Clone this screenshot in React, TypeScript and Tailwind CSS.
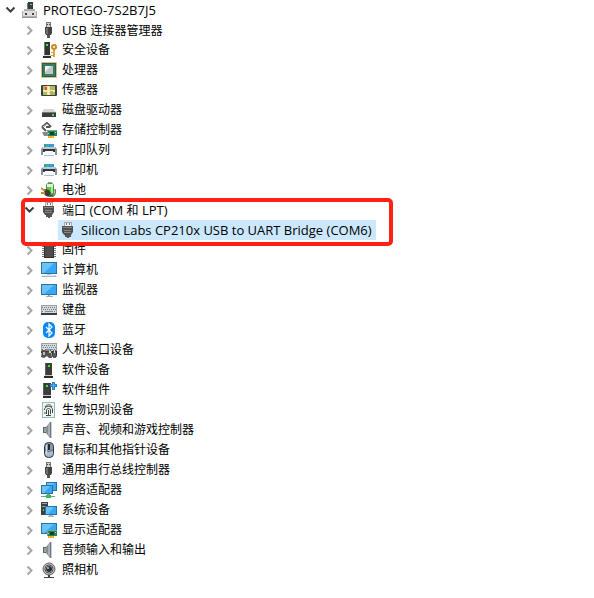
import type { ReactNode } from "react";

type IconName =
  | "root" | "usb" | "security" | "cpu" | "sensor" | "disk" | "storage" | "printer" | "battery"
  | "port" | "firmware" | "computer" | "monitor" | "keyboard" | "bluetooth" | "hid" | "software"
  | "component" | "fingerprint" | "speaker" | "mouse" | "network" | "system" | "display" | "camera";

const monitorAt = (x: number, y: number, w: number, h: number) => (
  <>
    <rect x={x} y={y} width={w} height={h} fill="#2f719e" />
    <rect x={x + 1} y={y + 1} width={w - 2} height={h - 2} fill="#35a9f5" />
    <path d={`M${x + 1} ${y + 1}h${w - 4}L${x + 3} ${y + h - 1}H${x + 1}z`} fill="#69c3fb" />
  </>
);

const tower = (
  <>
    <path d="M4 1h7v12H4z" fill="#3d3d3d" />
    <path d="M3 14h9v2H3z" fill="#2c2c2c" />
    <path d="M4 13h7v1H4z" fill="#c9c9c9" />
    <path d="M4 1h1v12H4z" fill="#5e5e5e" />
    <path d="M7 3h2v2H7z" fill="#2cf32c" />
  </>
);

const board = (
  <>
    <path d="M6 8h10v6H6z" fill="#278255" />
    <path d="M6 8h10v1H6zM6 8h1v6H6z" fill="#75aa8e" />
    <path d="M9 10h4v3H9z" fill="#153f2d" />
    <path d="M14 10h1v1h-1zM7 11h1v1H7z" fill="#aee0b9" />
    <path d="M7 14h6v2H7z" fill="#f2a22d" />
    <path d="M8 14h1v2H8zM11 14h1v2h-1z" fill="#ffc44d" />
  </>
);

const keys = (
  <>
    <path d="M0 3h16v9H0z" fill="#9ba2a8" />
    <path d="M1 4h14v7H1z" fill="#d5dadd" />
    <path d="M1 5.500h14M1 9.500h2M13 9.500h2" stroke="#747c82" strokeDasharray="1 1" />
    <path d="M2 7.500h13" stroke="#747c82" strokeDasharray="1 1" />
    <path d="M4 9.500h8" stroke="#858c91" />
    <path d="M0 11h16v2H0z" fill="#343d43" />
  </>
);

const drawings: Record<IconName, ReactNode> = {
  root: (
    <>
      <path d="M6 0h5v8H6z" fill="#3b3b3b" />
      <path d="M5 1h1v7H5z" fill="#777" />
      <path d="M8 2h2v1H8z" fill="#35e86b" />
      <path d="M2 7h11v2h2v6H0V9h2z" fill="#b0b0b0" />
      <path d="M1 9h13v5H1z" fill="#dedede" />
      <path d="M3 11h2v2H3zM10 11h2v2h-2z" fill="#444" />
      <path d="M0 15h15v1H0z" fill="#999" />
    </>
  ),
  usb: (
    <>
      <path d="M5 0h5v6H5z" fill="#777" />
      <path d="M6 1h3v4H6z" fill="#d6d6d6" />
      <path d="M6 2h1v1H6zM8 2h1v1H8z" fill="#444" />
      <path d="M4 5h7v6l-1 2H5l-1-2z" fill="#454545" />
      <path d="M5 6h2v6H5z" fill="#707070" />
      <path d="M6 13h3v3H6z" fill="#555" />
    </>
  ),
  security: (
    <>
      <path d="M3 0h6v13H3z" fill="#343434" />
      <path d="M3 0h1v13H3z" fill="#777" />
      <path d="M2 14h8v2H2z" fill="#303030" />
      <path d="M3 13h7v1H3z" fill="#ddd" />
      <path d="M5 2h2v2H5z" fill="#2cf32c" />
      <circle cx="13" cy="5" r="2" fill="none" stroke="#c88b20" strokeWidth="2" />
      <path d="M12 8h2v7h-2zM10 10h2v1h-2zM10 13h2v1h-2z" fill="#dda23a" />
    </>
  ),
  cpu: (
    <>
      <rect x="0.5" y="0.5" width="15" height="15" fill="#f3e5bd" stroke="#b98c31" strokeDasharray="1 1" />
      <path d="M1 1h14v14H1z" fill="#235f49" />
      <path d="M2 2h12v12H2z" fill="#377b60" />
      <path d="M4 4h8v8H4z" fill="#bfc7c8" />
      <path d="M4 4h6l-6 6z" fill="#eef0f0" />
    </>
  ),
  sensor: (
    <>
      <rect y="3" width="16" height="11" rx="1" fill="#414141" />
      <path d="M2 4h12v9H2z" fill="#f3e3a4" />
      <path d="M2 4h3v4H2zM9 4h5v4H9zM9 10h5v3H9zM2 10h4v3H2z" fill="#a9bd58" />
      <path d="M2 9h12M7.500 4v9" stroke="#fff2bd" />
      <path d="M4 5h2v3H4z" fill="#e44d34" />
      <path d="M9 9h3v1H9z" fill="#ee995d" />
    </>
  ),
  disk: (
    <>
      <path d="M3 7h9l3 3H1z" fill="#d5d5d5" />
      <path d="M1 10h14v5H1z" fill="#3c3c3c" />
      <path d="M1 10h14v1H1z" fill="#777" />
      <path d="M11 12h2v2h-2z" fill="#43dc5d" />
    </>
  ),
  storage: (
    <>
      <path d="M1 5l5-4 4 4M1 5l4 4M5 5h4" fill="none" stroke="#555" strokeWidth="2" />
      <path d="M2 5l4-3 2 2" fill="none" stroke="#c9c9c9" />
      <path d="M1 10h6v4H3z" fill="#888" />
      {board}
    </>
  ),
  printer: (
    <>
      <path d="M3 2h10v4H3z" fill="#3d8fc6" />
      <path d="M5 2h3v3H5z" fill="#33b98c" />
      <path d="M9 2h3v3H9z" fill="#2ea0ef" />
      <path d="M2 5h12l2 2v6h-2V9H2v4H0V7z" fill="#8b9195" />
      <path d="M2 5h12v2H2z" fill="#c3c9cc" />
      <path d="M2 7h12v3H2z" fill="#30383d" />
      <path d="M4 9h8l1 5H3z" fill="#f4f6f7" />
      <path d="M3 13h10v1H3z" fill="#b7bec3" />
    </>
  ),
  battery: (
    <>
      <path d="M7 0h4v2H7z" fill="#999" />
      <rect x="5" y="1" width="8" height="14" rx="3" fill="#43973d" />
      <path d="M6 5h6v7H6z" fill="#55ca45" />
      <path d="M6 2h6v3H6z" fill="#dff0db" />
      <path d="M10 5h2v6h-2z" fill="#a7e88e" />
      <path d="M3 7l5 1 2 3-2 3H5l-2-2z" fill="#3b3b3b" />
      <path d="M0 6l4 3M0 11h4" stroke="#c39330" strokeWidth="2" />
      <path d="M9 13c4 3 6 0 5-6" fill="none" stroke="#333" />
    </>
  ),
  port: (
    <>
      <path d="M4 0h8v5H4z" fill="#aaa" />
      <path d="M5 1h6v3H5z" fill="#f1f1f1" />
      <path d="M6 1h1v2H6zM9 1h1v2H9z" fill="#777" />
      <path d="M2 4h11v6l-2 3H4l-2-3z" fill="#505050" />
      <path d="M3 5h9v1H3zM4 8h7v1H4zM4 10h7v1H4z" fill="#858585" />
      <path d="M5 13h2v2H5zM9 13h2v2H9zM7 12h2v4H7z" fill="#555" />
    </>
  ),
  firmware: (
    <>
      <path d="M1 2.500h14M1 4.500h14M1 6.500h14M1 8.500h14M1 10.500h14M1 12.500h14M1 14.500h14" stroke="#777" />
      <path d="M3 1h10v15H3z" fill="#303030" />
      <path d="M4 2h8v13H4z" fill="#4d4d4d" />
    </>
  ),
  computer: (
    <>
      {monitorAt(0, 0, 16, 12)}
      <path d="M6 12h4v1H6z" fill="#b9c6d0" />
      <path d="M2 13h12l2 2H0z" fill="#a7b5c2" />
      <path d="M2 13h12v1H2z" fill="#e3e9ed" />
    </>
  ),
  monitor: (
    <>
      {monitorAt(0, 2, 16, 11)}
      <path d="M7 13h2v1H7zM5 14h7v1H5z" fill="#9cabb7" />
    </>
  ),
  keyboard: keys,
  bluetooth: (
    <>
      <rect x="2" width="12" height="16" rx="5" fill="#0687f5" />
      <path d="M5 5l6 6-3 3V2l3 3-6 6" fill="none" stroke="#fff" strokeWidth="1.2" />
    </>
  ),
  hid: (
    <>
      <g transform="translate(0 -2)">{keys}</g>
      <path d="M0 15l1-7h3l1 2h3l1-2h1l1 8H8l-2-2-3 2z" fill="#4d5357" />
      <path d="M2 10h2v3H2z" fill="#bbb" />
      <path d="M4 7h2v2H4z" fill="#f4503e" />
      <path d="M6 7h2v2H6z" fill="#33a8ef" />
      <path d="M8 9h2v2H8z" fill="#f7d751" />
      <rect x="11.500" y="8.500" width="4" height="7" rx="2" fill="#596168" stroke="#252a2e" />
      <path d="M13.500 8v3" stroke="#ddd" />
    </>
  ),
  software: tower,
  component: (
    <>
      <path d="M2 1h8v12H2z" fill="#3d3d3d" />
      <path d="M2 1h1v12H2z" fill="#5e5e5e" />
      <path d="M2 13h8v1H2z" fill="#c9c9c9" />
      <path d="M2 14h8v2H2z" fill="#2c2c2c" />
      <path d="M5 3h2v2H5z" fill="#2cf32c" />
      <path d="M12.500 0v8M9 3.500h7" stroke="#2383cc" strokeWidth="3" />
      <path d="M12.500 1v6M10 3.500h5" stroke="#4caeed" />
    </>
  ),
  fingerprint: (
    <>
      <rect x="1.5" y="0.5" width="12" height="15" fill="#edf5f1" stroke="#92bdb0" />
      <path
        d="M4 5c1-3 6-3 7 0M3.500 8c0-5 8-5 8 0v3M5.500 12V8c0-2 4-2 4 0v4M7.500 13V8M4 10v2M5 13.500h5"
        fill="none"
        stroke="#454b49"
      />
    </>
  ),
  speaker: (
    <>
      <path d="M2 5h4v6H2z" fill="#5f676c" />
      <path d="M5 5l4-5h2v16H9l-4-5z" fill="#858d92" />
      <path d="M7 3l2-2v14l-2-2z" fill="#a9b1b6" />
      <path d="M9 0h1v16H9z" fill="#707980" />
      <path d="M10 0h1v16h-1z" fill="#c7cdd0" />
      <path d="M3 6h2v4H3z" fill="#9ba3a8" />
    </>
  ),
  mouse: (
    <>
      <rect x="3.500" y="0.500" width="9" height="15" rx="4" fill="#8b9aab" stroke="#30343a" />
      <path d="M4 8h8v3c0 5-8 5-8 0z" fill="#aabbcd" />
      <path d="M4 8q4 3 8 0" fill="none" stroke="#526275" />
      <path d="M7 2h2v6H7z" fill="#24282e" />
      <path d="M5 3h1v9H5z" fill="#d1dbe5" />
    </>
  ),
  network: (
    <>
      {monitorAt(5, 0, 11, 9)}
      {monitorAt(0, 3, 12, 9)}
      <path d="M6 12h3v2H6z" fill="#87a98a" />
      <path d="M0 14h14v1H0z" fill="#6da671" />
      <path d="M5 13h5v3H5z" fill="#38b653" />
    </>
  ),
  system: (
    <>
      <path d="M0 0h7v13H0z" fill="#3e4245" />
      <path d="M1 1h5v1H1zM1 4h5v1H1z" fill="#9da3a7" />
      <path d="M2 7h1v2H2z" fill="#39df54" />
      {monitorAt(4, 4, 12, 9)}
      <path d="M8 13h4v1H8zM7 14h6v1H7z" fill="#a3b5c3" />
    </>
  ),
  display: (
    <>
      {monitorAt(0, 1, 16, 11)}
      {board}
    </>
  ),
  camera: (
    <>
      <circle cx="8" cy="7" r="6" fill="#b5b5b5" stroke="#666" />
      <circle cx="8" cy="7" r="4" fill="#e4e4e4" stroke="#555" />
      <circle cx="8" cy="7" r="3" fill="#292e34" />
      <path d="M6 5h2v2H6z" fill="#90a8bb" />
      <path d="M7 13h2v2H7zM3 15h10v1H3z" fill="#424242" />
    </>
  ),
};

function DeviceIcon({ name }: { name: IconName }) {
  return (
    <svg className="size-4 shrink-0" viewBox="0 0 16 16" aria-hidden="true">
      {drawings[name]}
    </svg>
  );
}

function Toggle({ label, open }: { label: string; open?: boolean }) {
  return (
    <button
      type="button"
      aria-label={label}
      aria-expanded={!!open}
      className={`flex size-4 shrink-0 items-center justify-center ${open ? "text-[#404040]" : "text-[#a6a6a6]"}`}
    >
      <svg className="size-4" viewBox="0 0 16 16" fill="none" stroke="currentColor" strokeWidth="2" aria-hidden="true">
        <path d={open ? "M3.500 5.500l4 4 4-4" : "M5.500 4.500l4 4-4 4"} />
      </svg>
    </button>
  );
}

// Latin runs are set one size larger than the Chinese characters beside them.
function Label({ text }: { text: string }) {
  return (
    <span>
      {text.split(/([\x20-\x7e]+)/).map((run, i) =>
        i % 2 === 1 ? (
          <span key={i} className="text-[13px] leading-5">
            {run}
          </span>
        ) : (
          run
        ),
      )}
    </span>
  );
}

function Row({ icon, label, open }: { icon: IconName; label: string; open?: boolean }) {
  return (
    <div className="flex h-5 items-center gap-[3px]">
      <Toggle label={label} open={open} />
      <div className="flex items-center gap-[5px]">
        <DeviceIcon name={icon} />
        <Label text={label} />
      </div>
    </div>
  );
}

type Device = { icon: IconName; label: string };

const before: Device[] = [
  { icon: "usb", label: "USB 连接器管理器" },
  { icon: "security", label: "安全设备" },
  { icon: "cpu", label: "处理器" },
  { icon: "sensor", label: "传感器" },
  { icon: "disk", label: "磁盘驱动器" },
  { icon: "storage", label: "存储控制器" },
  { icon: "printer", label: "打印队列" },
  { icon: "printer", label: "打印机" },
  { icon: "battery", label: "电池" },
];

const after: Device[] = [
  { icon: "firmware", label: "固件" },
  { icon: "computer", label: "计算机" },
  { icon: "monitor", label: "监视器" },
  { icon: "keyboard", label: "键盘" },
  { icon: "bluetooth", label: "蓝牙" },
  { icon: "hid", label: "人机接口设备" },
  { icon: "software", label: "软件设备" },
  { icon: "component", label: "软件组件" },
  { icon: "fingerprint", label: "生物识别设备" },
  { icon: "speaker", label: "声音、视频和游戏控制器" },
  { icon: "mouse", label: "鼠标和其他指针设备" },
  { icon: "usb", label: "通用串行总线控制器" },
  { icon: "network", label: "网络适配器" },
  { icon: "system", label: "系统设备" },
  { icon: "display", label: "显示适配器" },
  { icon: "speaker", label: "音频输入和输出" },
  { icon: "camera", label: "照相机" },
];

export default function App() {
  return (
    <main className="min-h-screen bg-white pl-[3px] font-['Open_Sans','Noto_Sans_CJK_SC',sans-serif] text-[12px] leading-5 whitespace-nowrap text-black">
      <Row icon="root" label="PROTEGO-7S2B7J5" open />
      <ul className="pl-[19px]">
        {before.map((d) => (
          <li key={d.label}>
            <Row {...d} />
          </li>
        ))}
        <li className="relative">
          <Row icon="port" label="端口 (COM 和 LPT)" open />
          <ul className="pl-9">
            <li className="flex h-5 w-fit items-center gap-[5px] bg-[#cce8ff] pr-1 pl-[2px]">
              <DeviceIcon name="port" />
              <Label text="Silicon Labs CP210x USB to UART Bridge (COM6)" />
            </li>
          </ul>
          <div className="pointer-events-none absolute -top-[2px] -bottom-[6px] -left-px w-[372px] rounded-[5px] border-4 border-[#ff2116]" />
        </li>
        {after.map((d) => (
          <li key={d.label}>
            <Row {...d} />
          </li>
        ))}
      </ul>
    </main>
  );
}
